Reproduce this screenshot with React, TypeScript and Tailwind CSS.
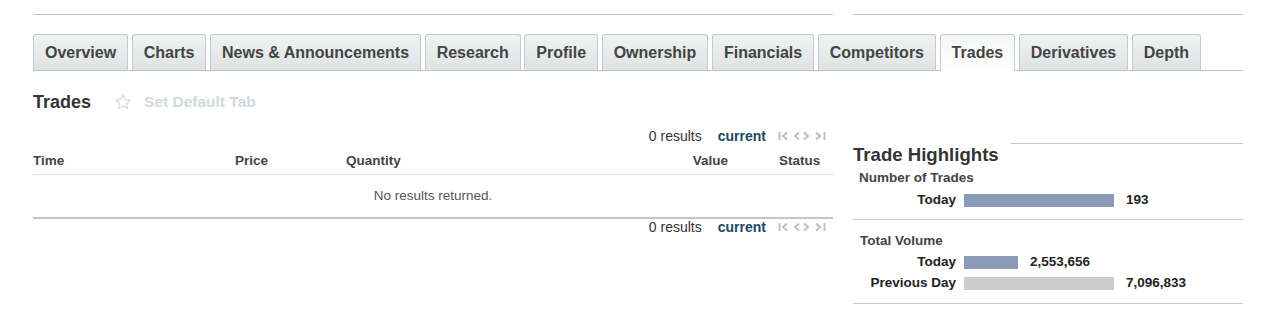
const tabs = [
  'Overview',
  'Charts',
  'News & Announcements',
  'Research',
  'Profile',
  'Ownership',
  'Financials',
  'Competitors',
  'Trades',
  'Derivatives',
  'Depth',
];

// pager arrows: first, prev, next, last
function PagerIcons() {
  return (
    <svg width="48" height="10" viewBox="0 0 48 10" className="ml-3" fill="none" stroke="#b7c2c6" strokeWidth="2">
      <path d="M1.5 1v8" />
      <path d="M9 1.5L5 5l4 3.5" />
      <path d="M21 1.5L17 5l4 3.5" />
      <path d="M26 1.5L30 5l-4 3.5" />
      <path d="M38 1.5L42 5l-4 3.5" />
      <path d="M46.5 1v8" />
    </svg>
  );
}

function Pager() {
  return (
    <div className="flex h-[20px] items-center justify-end pr-[7px] text-[14px]">
      <span className="text-[#333]">0 results</span>
      <span className="ml-4 font-bold text-[#1d4766]">current</span>
      <PagerIcons />
    </div>
  );
}

function BarRow({ label, value, width, grey }: { label: string; value: string; width: number; grey?: boolean }) {
  return (
    <div className="flex h-[21px] items-center text-[13.5px] font-bold text-[#222]">
      <div className="w-[103px] text-right">{label}</div>
      <div className="ml-2 h-[13px]" style={{ width }}>
        <div className={`h-full w-full ${grey ? 'bg-[#cccccc]' : 'bg-[#8a9bba]'}`} />
      </div>
      <span className="ml-3">{value}</span>
    </div>
  );
}

export default function App() {
  return (
    <div className="h-[311px] w-[1272px] bg-white pl-[33px] font-['Liberation_Sans',Arial,sans-serif]">
      <div className="flex pt-[14px]">
        <div className="h-px w-[800px] bg-[#bac6ca]" />
        <div className="ml-5 h-px w-[390px] bg-[#bac6ca]" />
      </div>

      {/* tab bar */}
      <div className="mt-[19px] flex w-[1210px] gap-[3.6px] border-b border-[#bcc6c8]">
        {tabs.map((t) => (
          <div
            key={t}
            className={
              t === 'Trades'
                ? '-mb-px flex h-[37px] items-center rounded-t-[3px] border border-b-0 border-[#c3cbcc] bg-gradient-to-b from-[#f4f5f5] to-white px-[11px] text-[16px] font-bold text-[#444]'
                : 'flex h-[36px] items-center rounded-t-[3px] border border-b-0 border-[#c3cbcc] bg-gradient-to-b from-[#f0f2f2] to-[#dde3e3] px-[11px] text-[16px] font-bold text-[#444]'
            }
          >
            {t}
          </div>
        ))}
      </div>

      {/* heading */}
      <div className="mt-[20px] flex h-[22px] items-center">
        <h1 className="text-[18px] font-bold text-[#333]">Trades</h1>
        <svg width="18" height="18" viewBox="0 0 24 24" className="ml-[23px]" fill="none" stroke="#d3dadd" strokeWidth="1.6" strokeLinejoin="round">
          <path d="M12 2.5l2.9 6.1 6.6.8-4.9 4.6 1.3 6.6L12 17.3l-5.9 3.3 1.3-6.6-4.9-4.6 6.6-.8z" />
        </svg>
        <span className="ml-[12px] text-[15.5px] font-bold text-[#d0d9dd]">Set Default Tab</span>
      </div>

      <div className="flex">
        {/* trades table */}
        <div className="mt-[13px] w-[800px]">
          <Pager />
          <div className="flex h-[29px] items-center border-b border-[#d9dfe1] pt-[2px] text-[13.5px] font-bold text-[#444]">
            <div className="w-[202px]">Time</div>
            <div className="w-[111px]">Price</div>
            <div className="flex-1">Quantity</div>
            <div className="w-[131px] pr-[51px] text-right">Value</div>
            <div className="w-[54px]">Status</div>
          </div>
          <div className="flex h-[44px] items-center justify-center border-b-2 border-[#bcc8cb] text-[13.5px] text-[#555]">
            No results returned.
          </div>
          <div className="-mt-[2px]">
            <Pager />
          </div>
        </div>

        {/* highlights */}
        <div className="ml-5 mt-[30px] w-[390px]">
          <div className="flex items-start">
            <h2 className="text-[18.6px] font-bold leading-[24px] text-[#333]">Trade Highlights</h2>
            <div className="ml-3 flex-1 border-t border-[#bac6ca]" />
          </div>
          <div className="border-b border-[#c2cacc] pb-[8px]">
            <div className="ml-[6px] flex h-[23px] items-center text-[13.5px] font-bold text-[#444]">Number of Trades</div>
            <BarRow label="Today" value="193" width={150} />
          </div>
          <div className="border-b border-[#c2cacc] pt-[10px] pb-[9px]">
            <div className="ml-[7px] flex h-[22px] items-center text-[13.5px] font-bold text-[#444]">Total Volume</div>
            <BarRow label="Today" value="2,553,656" width={54} />
            <BarRow label="Previous Day" value="7,096,833" width={150} grey />
          </div>
        </div>
      </div>
    </div>
  );
}
